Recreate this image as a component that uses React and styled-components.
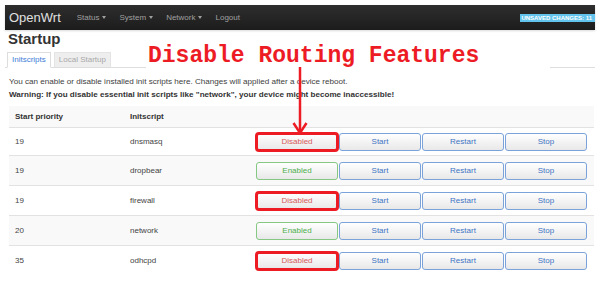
import React from 'react'
import styled, { createGlobalStyle } from 'styled-components';

const GlobalStyle = createGlobalStyle`
  body {
    margin: 0;
    background: #ffffff;
    font-family: "Liberation Sans", Arial, sans-serif;
    color: #404040;
  }
`;

const rows = [
  { prio: 19, name: 'dnsmasq', enabled: false },
  { prio: 19, name: 'dropbear', enabled: true },
  { prio: 19, name: 'firewall', enabled: false },
  { prio: 20, name: 'network', enabled: true },
  { prio: 35, name: 'odhcpd', enabled: false },
];

const App = () => {
  return (
    <StPage>
      <GlobalStyle />
      <StNavbar>
        <StBrand>OpenWrt</StBrand>
        <StMenu>
          <StMenuItem>Status<StCaret /></StMenuItem>
          <StMenuItem>System<StCaret /></StMenuItem>
          <StMenuItem>Network<StCaret /></StMenuItem>
          <StMenuItem>Logout</StMenuItem>
        </StMenu>
        <StBadge>UNSAVED CHANGES: 11</StBadge>
      </StNavbar>

      <StTitle>Startup</StTitle>

      <StTabs>
        <StTab active>Initscripts</StTab>
        <StTab>Local Startup</StTab>
      </StTabs>

      <StDesc>
        You can enable or disable installed init scripts here. Changes will applied after a device reboot.
        <br />
        <b>Warning: If you disable essential init scripts like "network", your device might become inaccessible!</b>
      </StDesc>

      <StTable>
        <StHeadRow>
          <StCell>Start priority</StCell>
          <StCell>Initscript</StCell>
          <div />
        </StHeadRow>
        {rows.map((r, i) => (
          <StRow key={r.name} first={i === 0} striped={i % 2 === 1}>
            <StCell>{r.prio}</StCell>
            <StCell>{r.name}</StCell>
            <StBtnBox>
              <StButton kind={r.enabled ? 'on' : 'off'} marked={!r.enabled}>
                {r.enabled ? 'Enabled' : 'Disabled'}
              </StButton>
              <StButton>Start</StButton>
              <StButton>Restart</StButton>
              <StButton>Stop</StButton>
            </StBtnBox>
          </StRow>
        ))}
      </StTable>

      {/* annotation layered over the screenshot */}
      <StNote>Disable Routing Features</StNote>
      <StArrow width="16" height="70" viewBox="0 0 16 70">
        <line x1="8" y1="0" x2="8" y2="65" stroke="#ED1C24" strokeWidth="2.5" />
        <polyline points="1.5,56 8,66 14.5,56" fill="none" stroke="#ED1C24" strokeWidth="2.5" />
      </StArrow>
    </StPage>
  )
}

const StPage = styled.div`
  position: relative;
  width: 590px;
  padding: 5px 5px 0 5px;
`;

const StNavbar = styled.div`
  display: flex;
  align-items: center;
  height: 25px;
  padding-left: 4px;
  background: linear-gradient(#2e2e2e, #1c1c1c);
  box-shadow: 0 1px 2px rgba(0, 0, 0, 0.15);
  overflow: hidden;
`;

const StBrand = styled.div`
  font-size: 13px;
  color: #e0e0e0;
  margin-right: 16px;
`;

const StMenu = styled.div`
  display: flex;
  gap: 13px;
`;

const StMenuItem = styled.div`
  display: flex;
  align-items: center;
  font-size: 8px;
  color: #a0a0a0;
`;

const StCaret = styled.span`
  display: inline-block;
  margin-left: 3px;
  border-top: 3px solid #a0a0a0;
  border-left: 2.5px solid transparent;
  border-right: 2.5px solid transparent;
`;

const StBadge = styled.div`
  margin-left: auto;
  height: 8px;
  line-height: 8px;
  padding: 0 3px 0 1px;
  background: #62c3ec;
  color: #ffffff;
  font-size: 6px;
  font-weight: 700;
  white-space: nowrap;
`;

const StTitle = styled.div`
  padding-left: 3px;
  font-size: 15px;
  line-height: 17px;
  font-weight: 700;
  color: #333333;
`;

const StTabs = styled.div`
  display: flex;
  gap: 3px;
  margin-top: 5px;
  padding-left: 2px;
  border-bottom: 1px solid #dddddd;
`;

const StTab = styled.div`
  box-sizing: border-box;
  height: 16px;
  line-height: 14px;
  padding: 0 4px;
  margin-bottom: -1px;
  font-size: 8px;
  border: 1px solid ${p => (p.active ? '#dddddd' : '#e4e4e4')};
  border-bottom-color: ${p => (p.active ? '#ffffff' : '#dddddd')};
  background: ${p => (p.active ? '#ffffff' : '#eeeeee')};
  color: ${p => (p.active ? '#3b7dd8' : '#a8a8a8')};
`;

const StDesc = styled.div`
  margin-top: 7px;
  padding-left: 4px;
  font-size: 8.1px;
  line-height: 13px;
  color: #404040;
  b {
    color: #333333;
  }
`;

const StTable = styled.div`
  margin: 5px 1px 0 4px;
`;

const StHeadRow = styled.div`
  display: grid;
  grid-template-columns: 115px 132px auto;
  align-items: center;
  height: 21px;
  background: #f9f9f9;
  font-size: 8px;
  font-weight: 700;
  color: #333333;
`;

const StRow = styled.div`
  display: grid;
  grid-template-columns: 115px 132px auto;
  align-items: center;
  box-sizing: border-box;
  height: ${p => (p.first ? '28px' : '30px')};
  border-top: 1px solid #e2e2e2;
  background: ${p => (p.striped ? '#f9f9f9' : '#ffffff')};
  font-size: 8px;
  color: #444444;
`;

const StCell = styled.div`
  padding-left: 6px;
`;

const StBtnBox = styled.div`
  display: flex;
  gap: 1px;
`;

const btnColors = {
  on: { border: '#84c884', text: '#4cae4c' },
  off: { border: '#d9534f', text: '#d65a5a' },
  act: { border: '#7ba3d9', text: '#3e74c3' },
};

const StButton = styled.button`
  width: 82px;
  height: 18px;
  padding: 0;
  border-radius: 3px;
  border: 1px solid ${p => btnColors[p.kind || 'act'].border};
  background: linear-gradient(#ffffff, #e8e8e8);
  color: ${p => btnColors[p.kind || 'act'].text};
  font-family: "Liberation Sans", Arial, sans-serif;
  font-size: 8px;
  outline: ${p => (p.marked ? '3px solid #ED1C24' : 'none')};
  outline-offset: -2px;
`;

const StNote = styled.div`
  position: absolute;
  left: 146px;
  top: 40px;
  width: 404px;
  height: 30px;
  padding: 5px 0 0 2px;
  box-sizing: border-box;
  background: #ffffff;
  font-family: "Liberation Mono", "Courier New", monospace;
  font-weight: 700;
  font-size: 23px;
  line-height: 23px;
  color: #ED1C24;
  white-space: nowrap;
`;

const StArrow = styled.svg`
  position: absolute;
  left: 292px;
  top: 67px;
`;

export default App
